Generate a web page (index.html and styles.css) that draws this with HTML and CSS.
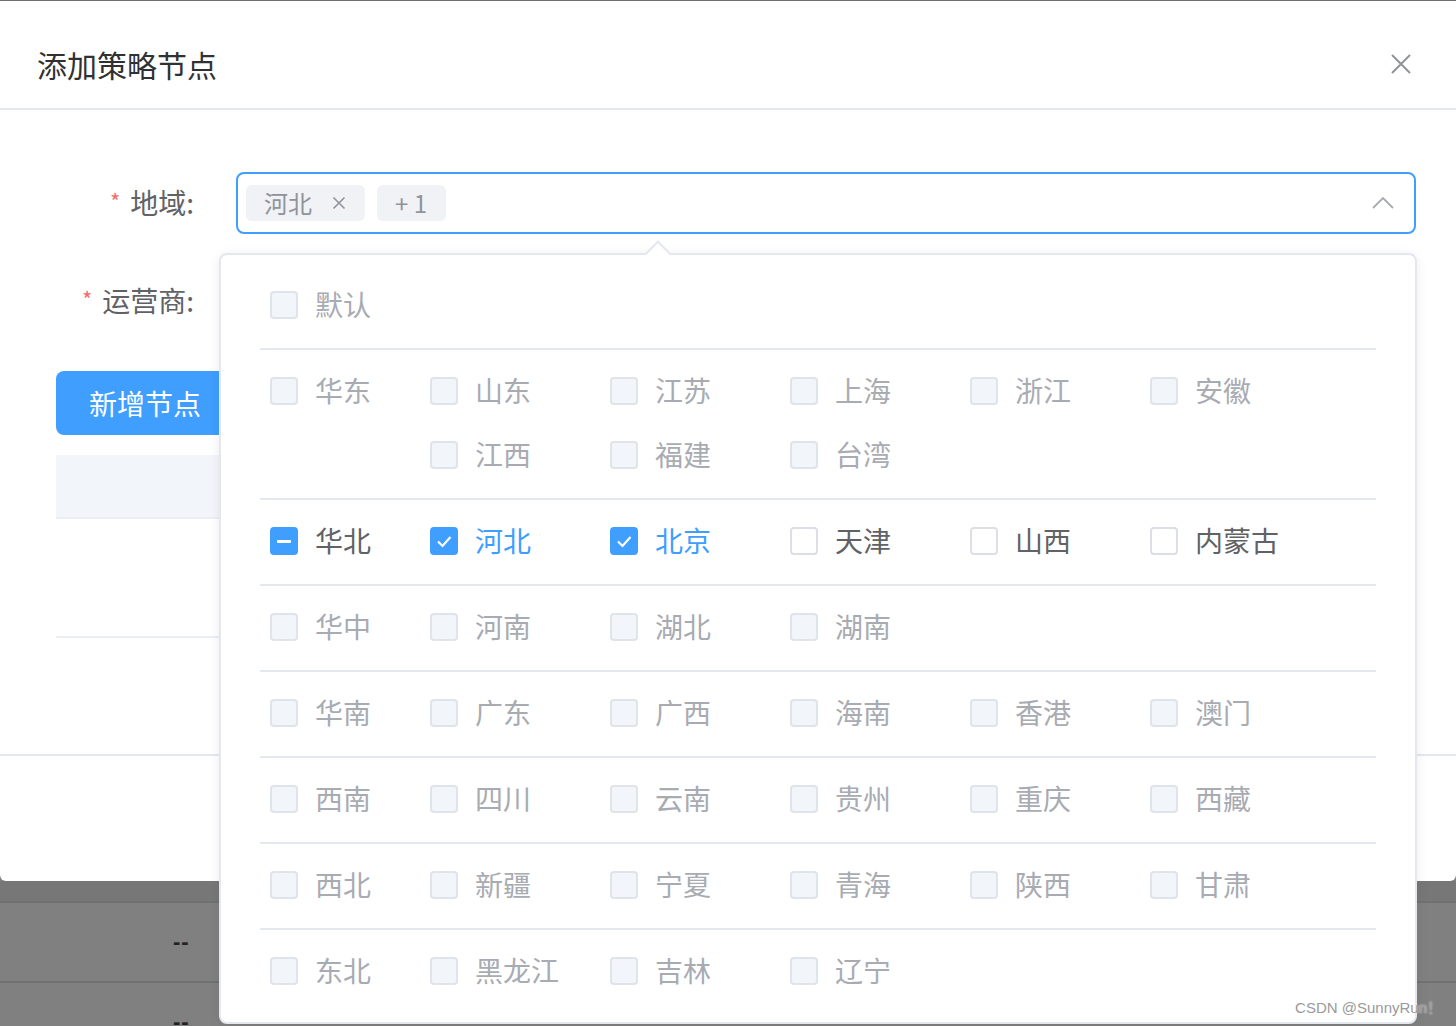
FILE: index.html
```html
<!DOCTYPE html>
<html lang="zh-CN">
<head>
<meta charset="utf-8">
<title>添加策略节点</title>
<link rel="stylesheet" href="styles.css">
</head>
<body>
<div class="page">
  <div class="dialog">
    <div class="dlg-header">
      <span class="dlg-title">添加策略节点</span>
      <svg class="dlg-close" width="22" height="22" viewBox="0 0 22 22"><path d="M2 2 L20 20 M20 2 L2 20" stroke="#909399" stroke-width="2" fill="none"/></svg>
    </div>
    <div class="dlg-body">
      <div class="form-row">
        <div class="form-label"><span class="req">*</span>地域:</div>
        <div class="select focus">
          <span class="tag">河北<svg class="tag-x" width="14" height="14" viewBox="0 0 14 14"><path d="M1.5 1.5 L12.5 12.5 M12.5 1.5 L1.5 12.5" stroke="#909399" stroke-width="1.6" fill="none"/></svg></span>
          <span class="tag">+ 1</span>
          <span class="spacer"></span>
          <svg class="chev" width="22" height="14" viewBox="0 0 22 14"><path d="M1 12 L11 2 L21 12" stroke="#a8abb2" stroke-width="1.8" fill="none"/></svg>
        </div>
      </div>
      <div class="form-row second">
        <div class="form-label"><span class="req">*</span>运营商:</div>
        <div class="select"></div>
      </div>
      <button class="btn-primary">新增节点</button>
      <div class="table">
        <div class="thead"></div>
        <div class="trow"></div>
      </div>
    </div>
    <div class="dlg-footer"></div>
  </div>
  <div class="mask">
    <div class="mrow mhead"></div>
    <div class="mrow"><span class="dash">--</span></div>
    <div class="mrow"><span class="dash">--</span></div>
  </div>

  <div class="popper">
    <span class="popper-arrow"></span>
    <div class="grp first">
      <div class="line">
        <div class="parent"><span class="cb dis"></span><span class="lb dis">默认</span></div>
      </div>
    </div>
    <div class="grp">
      <div class="parent top"><span class="cb dis"></span><span class="lb dis">华东</span></div>
      <div class="kids">
        <div class="kid"><span class="cb dis"></span><span class="lb dis">山东</span></div>
        <div class="kid"><span class="cb dis"></span><span class="lb dis">江苏</span></div>
        <div class="kid"><span class="cb dis"></span><span class="lb dis">上海</span></div>
        <div class="kid"><span class="cb dis"></span><span class="lb dis">浙江</span></div>
        <div class="kid"><span class="cb dis"></span><span class="lb dis">安徽</span></div>
        <div class="kid"><span class="cb dis"></span><span class="lb dis">江西</span></div>
        <div class="kid"><span class="cb dis"></span><span class="lb dis">福建</span></div>
        <div class="kid"><span class="cb dis"></span><span class="lb dis">台湾</span></div>
      </div>
    </div>
    <div class="grp">
      <div class="parent top"><span class="cb on"><span class="bar"></span></span><span class="lb">华北</span></div>
      <div class="kids">
        <div class="kid"><span class="cb on"><svg width="28" height="28" viewBox="0 0 28 28"><path d="M8 14.5 L12.5 19 L20.5 10" stroke="#fff" stroke-width="2.2" fill="none"/></svg></span><span class="lb sel">河北</span></div>
        <div class="kid"><span class="cb on"><svg width="28" height="28" viewBox="0 0 28 28"><path d="M8 14.5 L12.5 19 L20.5 10" stroke="#fff" stroke-width="2.2" fill="none"/></svg></span><span class="lb sel">北京</span></div>
        <div class="kid"><span class="cb"></span><span class="lb">天津</span></div>
        <div class="kid"><span class="cb"></span><span class="lb">山西</span></div>
        <div class="kid"><span class="cb"></span><span class="lb">内蒙古</span></div>
      </div>
    </div>
    <div class="grp">
      <div class="parent top"><span class="cb dis"></span><span class="lb dis">华中</span></div>
      <div class="kids">
        <div class="kid"><span class="cb dis"></span><span class="lb dis">河南</span></div>
        <div class="kid"><span class="cb dis"></span><span class="lb dis">湖北</span></div>
        <div class="kid"><span class="cb dis"></span><span class="lb dis">湖南</span></div>
      </div>
    </div>
    <div class="grp">
      <div class="parent top"><span class="cb dis"></span><span class="lb dis">华南</span></div>
      <div class="kids">
        <div class="kid"><span class="cb dis"></span><span class="lb dis">广东</span></div>
        <div class="kid"><span class="cb dis"></span><span class="lb dis">广西</span></div>
        <div class="kid"><span class="cb dis"></span><span class="lb dis">海南</span></div>
        <div class="kid"><span class="cb dis"></span><span class="lb dis">香港</span></div>
        <div class="kid"><span class="cb dis"></span><span class="lb dis">澳门</span></div>
      </div>
    </div>
    <div class="grp">
      <div class="parent top"><span class="cb dis"></span><span class="lb dis">西南</span></div>
      <div class="kids">
        <div class="kid"><span class="cb dis"></span><span class="lb dis">四川</span></div>
        <div class="kid"><span class="cb dis"></span><span class="lb dis">云南</span></div>
        <div class="kid"><span class="cb dis"></span><span class="lb dis">贵州</span></div>
        <div class="kid"><span class="cb dis"></span><span class="lb dis">重庆</span></div>
        <div class="kid"><span class="cb dis"></span><span class="lb dis">西藏</span></div>
      </div>
    </div>
    <div class="grp">
      <div class="parent top"><span class="cb dis"></span><span class="lb dis">西北</span></div>
      <div class="kids">
        <div class="kid"><span class="cb dis"></span><span class="lb dis">新疆</span></div>
        <div class="kid"><span class="cb dis"></span><span class="lb dis">宁夏</span></div>
        <div class="kid"><span class="cb dis"></span><span class="lb dis">青海</span></div>
        <div class="kid"><span class="cb dis"></span><span class="lb dis">陕西</span></div>
        <div class="kid"><span class="cb dis"></span><span class="lb dis">甘肃</span></div>
      </div>
    </div>
    <div class="grp">
      <div class="parent top"><span class="cb dis"></span><span class="lb dis">东北</span></div>
      <div class="kids">
        <div class="kid"><span class="cb dis"></span><span class="lb dis">黑龙江</span></div>
        <div class="kid"><span class="cb dis"></span><span class="lb dis">吉林</span></div>
        <div class="kid"><span class="cb dis"></span><span class="lb dis">辽宁</span></div>
      </div>
    </div>
  </div>

  <div class="watermark">CSDN @SunnyRun！</div>
</div>
</body>
</html>
```

FILE: styles.css
```css
* { box-sizing: border-box; }
html, body { margin: 0; padding: 0; }
body {
  width: 1456px;
  height: 1026px;
  overflow: hidden;
  font-family: "Noto Sans CJK SC", "Noto Sans", sans-serif;
  background: #7f7f7f;
}
.page {
  position: relative;
  width: 1456px;
  height: 1026px;
  display: flex;
  flex-direction: column;
}

/* dialog */
.dialog {
  flex: 0 0 881px;
  height: 881px;
  background: #fff;
  border-top: 1px solid #6b6e72;
  border-radius: 0 0 6px 6px;
  display: flex;
  flex-direction: column;
}
.dlg-header {
  flex: 0 0 109px;
  height: 109px;
  padding: 19px 44px 0 37px;
  border-bottom: 2px solid #e4e7ed;
  display: flex;
  align-items: center;
  justify-content: space-between;
}
.dlg-title {
  font-size: 30px;
  color: #303133;
}
.dlg-close { display: block; }

.dlg-body {
  flex: 0 0 646px;
  height: 646px;
  padding: 62px 40px 0 56px;
  border-bottom: 2px solid #e4e7ed;
}
.form-row {
  display: flex;
  align-items: center;
  margin-left: -56px;
  height: 62px;
}
.form-row.second { margin-top: 36px; }
.form-label {
  width: 236px;
  padding-right: 42px;
  text-align: right;
  font-size: 28px;
  color: #606266;
  line-height: 62px;
}
.req {
  color: #f56c6c;
  font-size: 22px;
  margin-right: 10px;
  position: relative;
  top: -4px;
}
.select {
  flex: 0 0 1180px;
  height: 62px;
  border: 2px solid #dcdfe6;
  border-radius: 8px;
  display: flex;
  align-items: center;
  padding: 0 20px 0 8px;
}
.select.focus { border-color: #409eff; }
.tag {
  height: 36px;
  background: #f0f2f5;
  border-radius: 6px;
  color: #909399;
  font-size: 24px;
  display: inline-flex;
  align-items: center;
  padding: 0 19px 0 18px;
  margin-right: 12px;
  line-height: 36px;
  white-space: pre;
}
.tag-x { margin-left: 20px; }
.spacer { flex: 1; }
.chev { display: block; }

.btn-primary {
  margin-top: 39px;
  height: 64px;
  padding: 0 33px;
  background: #409eff;
  border: none;
  border-radius: 8px;
  color: #fff;
  font-family: inherit;
  font-size: 28px;
  display: block;
}
.table { margin-top: 20px; }
.thead {
  height: 64px;
  background: #f2f5f9;
  border-bottom: 2px solid #ebeef5;
}
.trow {
  height: 119px;
  border-bottom: 2px solid #ebeef5;
}
.dlg-footer { flex: 1; }

/* mask area below the dialog */
.mask { flex: 1; background: #808080; }
.mrow {
  height: 80px;
  border-bottom: 2px solid #707172;
  display: flex;
  align-items: center;
  padding-left: 173px;
}
.mrow.mhead { height: 22px; background: #777; }
.dash {
  font-family: "Liberation Sans", sans-serif;
  font-weight: bold;
  font-size: 22px;
  color: #222;
  letter-spacing: 1px;
}

/* dropdown */
.popper {
  position: absolute;
  left: 219px;
  top: 253px;
  width: 1198px;
  height: 771px;
  background: #fff;
  border: 2px solid #e4e7ed;
  border-radius: 8px;
  box-shadow: 0 2px 12px rgba(0,0,0,0.08);
  padding: 0 39px;
}
.popper-arrow {
  position: absolute;
  left: 428px;
  top: -11px;
  width: 18px;
  height: 18px;
  background: #fff;
  border-top: 2px solid #e4e7ed;
  border-left: 2px solid #e4e7ed;
  transform: rotate(45deg);
}
.grp {
  display: flex;
  border-top: 2px solid #e4e7ed;
  padding: 19px 0 21px;
}
.grp.first {
  border-top: none;
  padding: 28px 0 21px;
}
.line { display: flex; }
.parent {
  width: 170px;
  padding-left: 10px;
  height: 44px;
  display: flex;
  align-items: center;
}
.kids {
  display: grid;
  grid-template-columns: repeat(5, 180px);
  row-gap: 20px;
}
.kid {
  height: 44px;
  display: flex;
  align-items: center;
}
.cb {
  width: 28px;
  height: 28px;
  border: 2px solid #dcdfe6;
  border-radius: 4px;
  background: #fff;
  flex: 0 0 28px;
  display: flex;
  align-items: center;
  justify-content: center;
}
.cb.dis { background: #f2f5f9; border-color: #dfe3ea; }
.cb.on { background: #409eff; border-color: #409eff; }
.cb.on svg { display: block; flex: 0 0 28px; }
.bar {
  width: 14px;
  height: 3px;
  background: #fff;
  border-radius: 1px;
}
.lb {
  margin-left: 17px;
  font-size: 28px;
  color: #606266;
  line-height: 44px;
  white-space: nowrap;
  position: relative;
  top: -1px;
}
.lb.dis { color: #a8abb2; }
.lb.sel { color: #409eff; }

.watermark {
  position: absolute;
  right: 14px;
  bottom: 9px;
  font-family: "Liberation Sans", "Noto Sans CJK SC", sans-serif;
  font-size: 15px;
  color: #9a9a9a;
  text-shadow: 0 0 2px rgba(255,255,255,0.8);
}
```
